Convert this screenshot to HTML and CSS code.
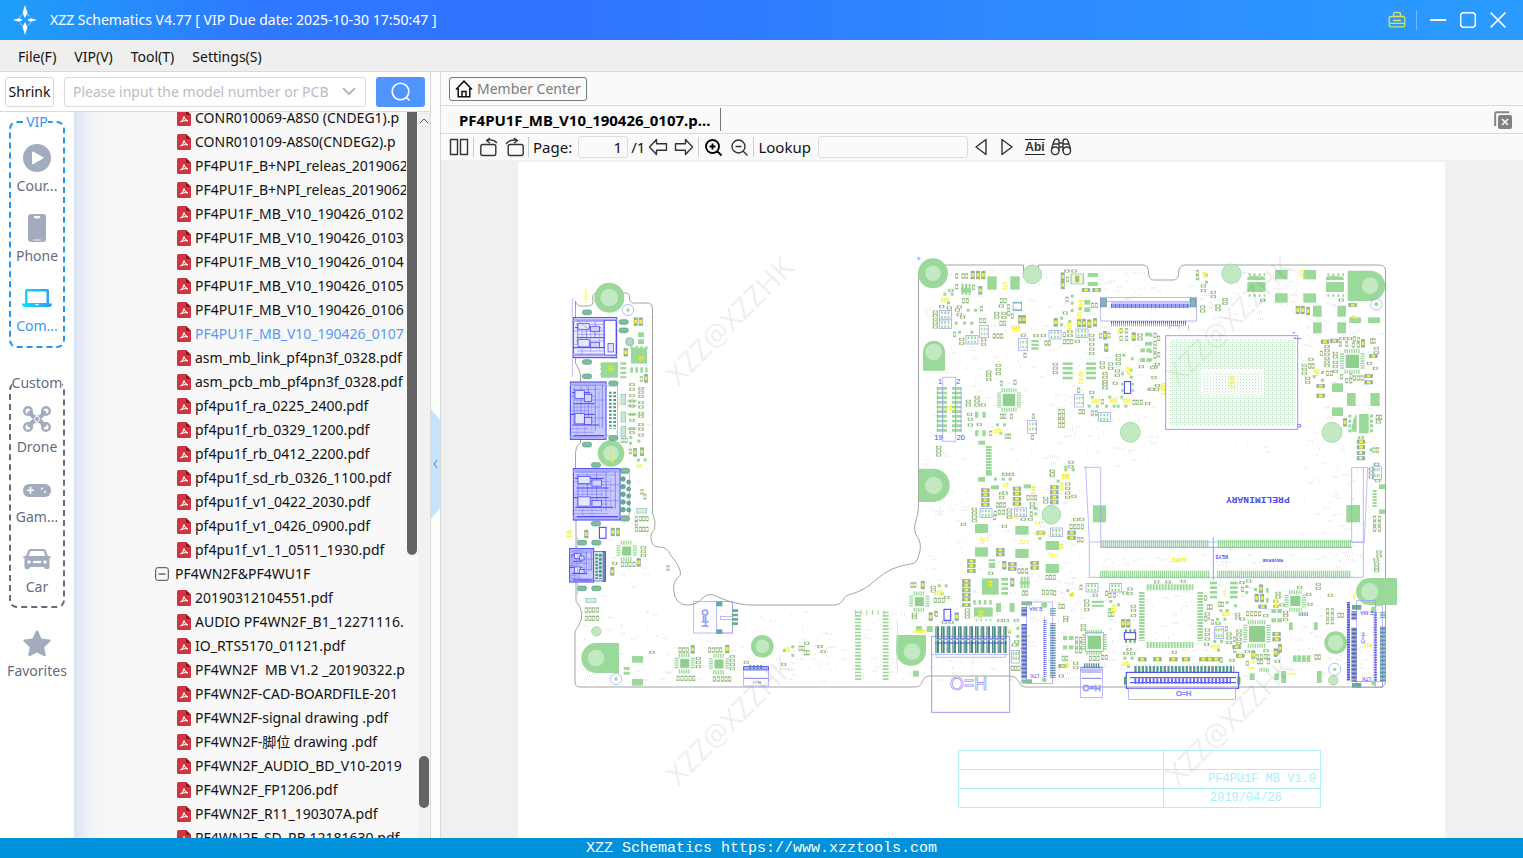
FILE: index.html
```html
<!DOCTYPE html>
<html lang="en">
<head>
<meta charset="utf-8">
<title>XZZ Schematics</title>
<link rel="stylesheet" href="styles.css">
</head>
<body>
<svg class="defs" aria-hidden="true">
  <symbol id="pdf" viewBox="0 0 14 16"><path d="M1.500 0H9l5 5v9.500q0 1.500-1.500 1.500h-11Q0 16 0 14.500v-13Q0 0 1.500 0z" fill="#d0343c"/><path d="M9 0l5 5h-3.500Q9 5 9 3.500z" fill="#8c1218"/><path d="M3.500 12.300q2.800-1.800 3.500-6 .3 3.300 4 4.700-3.500-.6-6.500.5" fill="none" stroke="#fff" stroke-width="1.100"/></symbol>
</svg>
<div class="app">
  <header class="titlebar">
    <svg class="logo" viewBox="0 0 28 30"><circle cx="14" cy="15" r="6" fill="none" stroke="#9fd4ff" stroke-width="1" stroke-dasharray="6 3"/><path d="M14 0l2.500 8-2.500 5-2.500-5zM14 30l2.500-8-2.500-5-2.500 5zM2 15l6-1.800 4 1.800-4 1.800zM26 15l-6-1.800-4 1.800 4 1.800z" fill="#fff"/></svg>
    <h1 class="title">XZZ Schematics V4.77 [ VIP Due date: 2025-10-30 17:50:47 ]</h1>
    <button class="win" aria-label="Toolbox"><svg viewBox="0 0 18 18"><path d="M3 5.500h12q1.800 0 1.800 1.800V14q0 1.800-1.800 1.800H3Q1.200 15.800 1.200 14V7.300Q1.200 5.500 3 5.500zM5.500 5V3q0-1.500 1.500-1.500h4q1.500 0 1.500 1.500v2M5 9.500h8M2 12.300h14" fill="none" stroke="#d8e25a" stroke-width="1.300"/></svg></button>
    <span class="win-sep"></span>
    <button class="win" aria-label="Minimize"><svg viewBox="0 0 18 18"><path d="M1 9h16" stroke="#fff" stroke-width="2"/></svg></button>
    <button class="win" aria-label="Maximize"><svg viewBox="0 0 18 18"><rect x="1.700" y="1.700" width="14.600" height="14.600" rx="3" fill="none" stroke="#fff" stroke-width="1.500"/></svg></button>
    <button class="win" aria-label="Close"><svg viewBox="0 0 18 18"><path d="M1.500 1.500l15 15M16.500 1.500l-15 15" stroke="#fff" stroke-width="1.700"/></svg></button>
  </header>
  <nav class="menubar">
    <button>File(F)</button><button>VIP(V)</button><button>Tool(T)</button><button>Settings(S)</button>
  </nav>
  <main class="main">
    <section class="left">
      <form class="search">
        <button type="button" class="shrink">Shrink</button>
        <div class="combo"><input type="text" aria-label="Model number" placeholder="Please input the model number or PCB"><svg viewBox="0 0 14 9"><path d="M1 1l6 6 6-6" fill="none" stroke="#a5a8ad" stroke-width="1.600"/></svg></div>
        <button type="button" class="go" aria-label="Search"><svg viewBox="0 0 20 20"><circle cx="9.500" cy="9.500" r="8.300" fill="none" stroke="#fff" stroke-width="1.600"/><path d="M15.500 15.500l3 3" stroke="#fff" stroke-width="1.600"/></svg></button>
      </form>
      <div class="browse">
        <aside class="side">
          <fieldset class="group vip">
            <legend>VIP</legend>
            <button><svg viewBox="0 0 30 30"><circle cx="15" cy="15" r="14" fill="#a3abbe"/><path d="M10 9.500q0-1.500 1.500-.8l9.500 5.300q1 .8 0 1.600L11.500 21q-1.500.7-1.500-.8z" fill="#fff"/></svg>Cour...</button>
            <button><svg viewBox="0 0 30 30"><rect x="6" y="1" width="18" height="28" rx="3" fill="#a3abbe"/><path d="M12 3.500q0 1.500 1.500 1.500h3q1.500 0 1.500-1.500zM11 27h8" stroke="#fff" stroke-width=".8" fill="#fff"/></svg>Phone</button>
            <button class="on"><svg viewBox="0 0 30 30"><defs><linearGradient id="lg"><stop offset="0" stop-color="#04e2fb"/><stop offset="1" stop-color="#2f9af8"/></linearGradient></defs><path d="M3 8q0-2 2-2h20q2 0 2 2v12.500h3q0 3.500-3 3.500H3q-3 0-3-3.500h3zM5.500 8.500v11.500h19V8.500z" fill="url(#lg)" fill-rule="evenodd"/><path d="M13 21.700h4" stroke="#fff"/></svg>Com...</button>
          </fieldset>
          <fieldset class="group custom">
            <legend>Custom</legend>
            <button><svg viewBox="0 0 30 30"><g fill="none" stroke="#a3abbe"><path d="M7 7q4 7 8 7t8-7M7 23q4-7 8-7t8 7" stroke-width="4.500"/><circle cx="6" cy="7" r="3.800" stroke-width="2.500"/><circle cx="24" cy="7" r="3.800" stroke-width="2.500"/><circle cx="6" cy="23" r="3.800" stroke-width="2.500"/><circle cx="24" cy="23" r="3.800" stroke-width="2.500"/></g><circle cx="15" cy="15" r="2.600" fill="#a3abbe" stroke="#fff" stroke-width=".9"/></svg>Drone</button>
            <button><svg viewBox="0 0 30 30"><rect x="1" y="10" width="28" height="13" rx="6" fill="#a3abbe"/><path d="M5 16.300h7M8.500 12.800v7" stroke="#fff" stroke-width="1.600"/><circle cx="20" cy="14.500" r="1" fill="#fff"/><circle cx="23" cy="18" r="1" fill="#fff"/></svg>Gam...</button>
            <button><svg viewBox="0 0 30 30"><path d="M1 14q0-2 2-2h1l2.500-6Q7 5 8.500 5h13q1.500 0 2 1L26 12h1q2 0 2 2h-1.500v9q0 2-1.500 2h-2.500q-1.500 0-1.500-2H8q0 2-1.500 2H4q-1.500 0-1.500-2v-9zM6.500 12h17L21.500 7h-13z" fill="#a3abbe" fill-rule="evenodd"/><circle cx="7" cy="18" r="1.700" fill="#fff"/><circle cx="23" cy="18" r="1.700" fill="#fff"/><path d="M11 18h8" stroke="#fff" stroke-width="2.200"/></svg>Car</button>
          </fieldset>
          <button class="fav"><svg viewBox="0 0 30 30"><path d="M15 2.500q.8 0 1.300 1.100l3.200 7 7.600.9q2.600.5.900 2.300l-5.800 5.400 1.500 7.500q.2 2.300-1.900 1.400L15 24.500l-6.800 3.600q-2.100.9-1.900-1.400l1.500-7.500L2 13.800q-1.700-1.800.9-2.300l7.600-.9 3.200-7q.5-1.100 1.300-1.100z" fill="#a3abbe"/></svg>Favorites</button>
        </aside>
        <div class="tree">
          <ul id="files"></ul>
          <span class="thumb inner"></span>
        </div>
        <div class="scroll"><svg viewBox="0 0 10 6"><path d="M1 5l4-4 4 4" fill="none" stroke="#555"/></svg><span class="thumb outer"></span></div>
      </div>
    </section>
    <div class="split"><button aria-label="Collapse panel"><svg viewBox="0 0 9 110" preserveAspectRatio="none"><path d="M0 0l9 11v88l-9 11z" fill="#c5e3fb"/><path d="M6 51l-3 4 3 4" fill="none" stroke="#3b83d8"/></svg></button></div>
    <section class="right">
      <div class="memberbar"><button class="member"><svg viewBox="0 0 18 18"><path d="M1 9.500L9 1.200l8 8.300M3.200 8v8.800h11.600V8M7 16.800V11.500h4v5.300" fill="none" stroke="#111" stroke-width="1.500"/></svg>Member Center</button></div>
      <div class="tabs"><button class="tab">PF4PU1F_MB_V10_190426_0107.p...</button><button class="closeall" aria-label="Close all tabs"><svg viewBox="0 0 18 18"><path d="M1.200 15V2.500q0-1.300 1.300-1.300H15" fill="none" stroke="#858585" stroke-width="2"/><rect x="4" y="4" width="14" height="14" rx="2" fill="#808080"/><path d="M8 8l6 6M14 8l-6 6" stroke="#fff" stroke-width="1.500"/></svg></button></div>
      <div class="tools">
        <button aria-label="Two pages"><svg viewBox="0 0 20 20"><path d="M1.500 2.500h7v15h-7zM11.500 2.500h7v15h-7z" class="ln"/></svg></button><i class="sep"></i>
        <button aria-label="Rotate left"><svg viewBox="0 0 20 20"><rect x="2.800" y="7.500" width="15" height="11" rx="2" class="ln"/><path d="M19 6Q15 1.800 9 3.300M12 1L8.500 3.500 12 6.300" class="ln"/></svg></button>
        <button class="rr" aria-label="Rotate right"><svg viewBox="0 0 20 20"><rect x="4.200" y="7.500" width="15" height="11" rx="2" class="ln"/><path d="M2 7Q6 1.800 13 3.300M10 1l3.500 2.500L10 6.300" class="ln"/></svg></button><i class="sep"></i>
        <label for="page">Page:</label><input id="page" class="page" type="text" value="1"><span class="total">/1</span>
        <button aria-label="Previous page"><svg viewBox="0 0 20 20"><path d="M1.500 10l7-7.500v4.300h10v6.400h-10v4.300z" class="ln"/></svg></button>
        <button class="next" aria-label="Next page"><svg viewBox="0 0 20 20"><path d="M18.500 10l-7-7.500v4.300h-10v6.400h10v4.300z" class="ln"/></svg></button><i class="sep"></i>
        <button aria-label="Zoom in"><svg viewBox="0 0 20 20"><path d="M9.500 3a6.500 6.500 0 100 13 6.500 6.500 0 100-13zM14.200 14.200l4.300 4.300M6.500 9.500h6M9.500 6.500v6" class="ln bold"/></svg></button>
        <button class="next" aria-label="Zoom out"><svg viewBox="0 0 20 20"><path d="M9.500 3a6.500 6.500 0 100 13 6.500 6.500 0 100-13zM14.200 14.200l4.300 4.300M6.500 9.500h6" class="ln"/></svg></button><i class="sep"></i>
        <label for="look">Lookup</label><input id="look" class="look" type="text">
        <button aria-label="Find previous"><svg viewBox="0 0 20 20"><path d="M14 2.500v15L4 10z" class="ln"/></svg></button>
        <button class="next" aria-label="Find next"><svg viewBox="0 0 20 20"><path d="M4 2.500v15L14 10z" class="ln"/></svg></button>
        <button class="abi">Abi</button>
        <button class="bino" aria-label="Find"><svg viewBox="0 0 22 20"><g class="ln"><path d="M1.500 12L4 4q.5-2 2.500-2 2.500 0 2.500 2.500V14M20.500 12L18 4q-.5-2-2.500-2Q13 2 13 4.500V14M9 6h4M9 10h4M3 7h6M13 7h6"/><circle cx="5.200" cy="13.800" r="3.800"/><circle cx="16.800" cy="13.800" r="3.800"/></g></svg></button>
      </div>
      <div class="viewer">
        <div class="sheet"><svg id="board" viewBox="518 162 927 676" preserveAspectRatio="xMidYMin meet" role="img" aria-label="PF4PU1F board layout"></svg></div>
      </div>
    </section>
  </main>
  <footer class="status">XZZ Schematics https://www.xzztools.com</footer>
</div>
<script src="board.js"></script>
</body>
</html>
```
FILE: styles.css
```css
* { box-sizing: border-box; }
body { margin: 0; font: 15px/20px "Noto Sans", "Noto Sans CJK SC", sans-serif; color: #111; }
button, input { font: inherit; color: inherit; margin: 0; padding: 0; border: 0; background: none; }
button { cursor: pointer; }
svg { display: block; flex: none; }
.defs { position: absolute; width: 0; height: 0; }
.app { height: 100vh; display: flex; flex-direction: column; overflow: hidden; background: #f0f0f0; }
.titlebar { flex: none; height: 40px; display: flex; align-items: center; padding: 0 16px 0 11px; background: linear-gradient(90deg, #1e9ff8 0, #2f78ff 17%, #3073ff 36%, #2e88ff 65%, #2a9cff 100%); color: #fff; }
.logo { width: 28px; height: 30px; }
.title { flex: 1; margin: 0 0 0 11px; font-size: 14px; line-height: 22px; font-weight: 400; white-space: nowrap; }
.win { width: 18px; height: 18px; margin-left: 12px; }
.win svg { width: 18px; height: 18px; }
.win-sep { width: 1px; height: 20px; margin-left: 10px; background: #73b8ff; }
.menubar { flex: none; height: 32px; display: flex; align-items: center; gap: 18px; padding: 2px 18px 0; border-bottom: 1px solid #dadada; background: #efefef; font-size: 14px; }
.main { flex: 1; min-height: 0; display: flex; }
.left { flex: none; width: 430px; display: flex; flex-direction: column; background: #fafafa; }
.search { flex: none; height: 40px; display: flex; align-items: center; padding: 0 5px; border-bottom: 1px solid #dadada; background: #fff; font-size: 14px; }
.shrink { width: 49px; height: 30px; padding-top: 1px; border: 1px solid #d8d8d8; border-radius: 3px; }
.combo { width: 302px; height: 30px; margin: 0 10px; display: flex; align-items: center; border: 1px solid #d8dade; border-radius: 3px; padding: 0 9px 0 8px; gap: 6px; background: #fff; }
.combo input { flex: 1; min-width: 0; }
.combo input::placeholder { color: #b9bdc4; opacity: 1; }
.combo svg { width: 14px; height: 9px; }
.go { width: 49px; height: 30px; display: grid; place-items: center; border-radius: 3px; background: #5094ff; }
.go svg { width: 20px; height: 20px; }
.browse { flex: 1; min-height: 0; display: flex; }
.side { flex: none; width: 74px; background: #fff; color: #646c80; font-size: 14px; text-align: center; }
.side button { width: 56px; height: 70px; display: flex; flex-direction: column; align-items: center; gap: 3px; padding-top: 11px; }
.side button svg { width: 30px; height: 30px; }
.group { width: 56px; min-width: 0; margin: 0 9px; padding: 0; border: 2px dashed #646c80; border-radius: 8px; display: flex; flex-direction: column; align-items: center; }
.group legend { padding: 0; margin: 0 auto; line-height: 20px; }
.vip { border-color: #2795f2; height: 236px; }
.vip legend, .side .on { color: #3897f5; }
.custom { height: 235px; margin-top: 25px; }
.side .fav { width: 74px; margin-top: 9px; }
.tree { flex: 1; min-width: 0; position: relative; overflow: hidden; background: linear-gradient(90deg, #dbe3f2 0, #f1f3f7 16px, #f8f8f8 36px); font-size: 14px; }
.tree ul { list-style: none; margin: -6px 12px 0 0; padding: 0 0 0 103px; }
.tree li { height: 24px; line-height: 26px; overflow: hidden; display: flex; align-items: center; gap: 4px; white-space: pre; }
.tree li svg { width: 14px; height: 16px; }
.tree .folder { margin-left: -22px; gap: 6px; }
.tree .sel { color: #5b97f5; }
.thumb { display: block; background: #646464; border-radius: 5px; }
.inner { position: absolute; right: 1px; top: 0; width: 10px; height: 61%; border-radius: 0 0 5px 5px; }
.scroll { flex: none; width: 12px; background: #f1f1f1; display: flex; flex-direction: column; align-items: center; padding-top: 6px; }
.scroll svg { width: 10px; height: 6px; }
.outer { width: 10px; height: 52px; margin-top: auto; margin-bottom: 30px; }
.split { flex: none; width: 11px; padding-top: 18px; border: solid #dadada; border-width: 0 1px; background: #fafffa; display: flex; align-items: center; }
.split button, .split svg { width: 9px; height: 110px; }
.right { flex: 1; min-width: 0; display: flex; flex-direction: column; background: #fafafa; }
.memberbar { flex: none; height: 34px; padding: 5px 8px; border-bottom: 1px solid #dadada; }
.member { height: 24px; display: flex; align-items: center; gap: 4px; padding: 0 5px; border: 1px solid #777; border-radius: 3px; color: #7c7c7c; font-size: 14px; }
.member svg { width: 18px; height: 18px; }
.tabs { flex: none; height: 28px; display: flex; justify-content: space-between; align-items: center; padding: 0 11px 0 8px; border-bottom: 1px solid #dadada; }
.tab { height: 23px; padding: 0 10px; border-right: 1px solid #777; font-weight: 700; color: #000; }
.closeall svg { width: 18px; height: 18px; }
.tools { flex: none; height: 26px; display: flex; align-items: center; padding-left: 8px; white-space: nowrap; }
.tools button, .tools svg { width: 20px; height: 20px; }
.tools .bino, .bino svg { width: 22px; }
.ln { fill: none; stroke: #333; stroke-width: 1.4; stroke-linejoin: round; }
.ln.bold { stroke: #000; stroke-width: 1.9; }
.sep { width: 1px; height: 20px; margin: 0 4px; background: #ccc; }
.tools .rr, .tools .next { margin-left: 6px; }
.tools input { height: 22px; border: 1px solid #ddd; border-radius: 3px; }
.page { width: 50px; margin-left: 6px; padding-right: 5px; text-align: right; }
.total { margin: 0 3px; }
.look { width: 150px; margin: 0 4px 0 7px; padding: 0 5px; }
.tools .abi { margin: 0 5px 0 7px; height: 16px; border: solid #222; border-width: 1px 0; font: 700 12px/14px "Liberation Sans", sans-serif; color: #333; }
.viewer { flex: 1; min-height: 0; padding: 2px 78px 0 77px; background: #f0f0f0; overflow: hidden; }
.sheet { height: 100%; background: #fff; }
.sheet svg { width: 100%; }
.status { flex: none; height: 20px; background: #0091da; color: #fff; font: 15px/22px "Liberation Mono", monospace; text-align: center; }
.wm { font: 29px "Noto Sans", sans-serif; fill: #000; fill-opacity: .08; text-anchor: middle; }
.yl { font: 700 14px "Liberation Mono", monospace; fill: #f4f400; }
.bl { font-family: "Liberation Sans", sans-serif; fill: #4b4bf0; }
.hollow { font-family: "Liberation Sans", sans-serif; fill: #fff; stroke: #8c8cfa; stroke-width: 2; }
.cy { font: 12px "Liberation Mono", monospace; fill: #a8f0fb; }
```
FILE: board.js
```js
const files = [
  "CONR010069-A8S0 (CNDEG1).p", "CONR010109-A8S0(CNDEG2).p", "PF4PU1F_B+NPI_releas_2019062",
  "PF4PU1F_B+NPI_releas_2019062", "PF4PU1F_MB_V10_190426_0102", "PF4PU1F_MB_V10_190426_0103",
  "PF4PU1F_MB_V10_190426_0104", "PF4PU1F_MB_V10_190426_0105", "PF4PU1F_MB_V10_190426_0106",
  "*PF4PU1F_MB_V10_190426_0107", "asm_mb_link_pf4pn3f_0328.pdf", "asm_pcb_mb_pf4pn3f_0328.pdf",
  "pf4pu1f_ra_0225_2400.pdf", "pf4pu1f_rb_0329_1200.pdf", "pf4pu1f_rb_0412_2200.pdf",
  "pf4pu1f_sd_rb_0326_1100.pdf", "pf4pu1f_v1_0422_2030.pdf", "pf4pu1f_v1_0426_0900.pdf",
  "pf4pu1f_v1_1_0511_1930.pdf", "-PF4WN2F&amp;PF4WU1F", "20190312104551.pdf", "AUDIO PF4WN2F_B1_12271116.",
  "IO_RTS5170_01121.pdf", "PF4WN2F  MB V1.2 _20190322.p", "PF4WN2F-CAD-BOARDFILE-201",
  "PF4WN2F-signal drawing .pdf", "PF4WN2F-脚位 drawing .pdf", "PF4WN2F_AUDIO_BD_V10-2019",
  "PF4WN2F_FP1206.pdf", "PF4WN2F_R11_190307A.pdf", "PF4WN2F_SD_RB 12181630.pdf"
];
document.getElementById("files").innerHTML = files.map(f => {
  if (f[0] === "-") return `<li class="folder"><svg viewBox="0 0 14 14"><rect x=".7" y=".7" width="12.600" height="12.600" rx="2" fill="none" stroke="#444"/><path d="M3.500 7h7" stroke="#222"/></svg>${f.slice(1)}</li>`;
  const on = f[0] === "*";
  return `<li${on ? ' class="sel"' : ""}><svg><use href="#pdf"/></svg>${on ? f.slice(1) : f}</li>`;
}).join("");

const G = "#9bd99b", B = "#9a9afb", DB = "#3c3cf0";
let out = "";
const nums = s => s.trim() ? s.trim().split(/\s+/).map(p => p.split(",").map(Number)) : [];
const rect = (x, y, w, h, fill, stroke, sw) => { out += `<rect x="${x}" y="${y}" width="${w}" height="${h}" fill="${fill || "none"}"${stroke ? ` stroke="${stroke}" stroke-width="${sw || 2}"` : ""}/>`; };
const path = (d, stroke, sw, fill) => { out += `<path d="${d}" fill="${fill || "none"}" stroke="${stroke || "none"}" stroke-width="${sw || 2}"/>`; };
const circ = (x, y, r, fill, stroke) => { out += `<circle cx="${x}" cy="${y}" r="${r}" fill="${fill || "none"}"${stroke ? ` stroke="${stroke}" stroke-width="2"` : ""}/>`; };
const text = (x, y, s, cls, size, turn) => { out += `<text class="${cls}"${size ? ` style="font-size:${size}px"` : ""} transform="translate(${x} ${y}) rotate(${turn || 0})">${s}</text>`; };
/* evenly spaced pads: hatch runs along x (h) or along y (v) */
const hatch = (x, y, w, h, dir, on, off, col) => {
  out += dir === "h"
    ? `<path d="M${x} ${y + h / 2}h${w}" stroke="${col || G}" stroke-width="${h}" stroke-dasharray="${on} ${off}"/>`
    : `<path d="M${x + w / 2} ${y}v${h}" stroke="${col || G}" stroke-width="${w}" stroke-dasharray="${on} ${off}"/>`;
};
/* passives: two pads, silkscreen outline, white or yellow middle */
const passH = (x, y, k) => { const w = k ? 23 : 14, h = k ? 10 : 7, p = k ? 6 : 3;
  rect(x - w / 2, y - h / 2, w, h, k ? "#f0f430" : "#fff", k ? "#9aa2e6" : "#a8bf84", 2);
  rect(x - w / 2, y - h / 2, p, h, "#84b884"); rect(x + w / 2 - p, y - h / 2, p, h, "#84b884"); };
const passV = (x, y, k) => { const w = k ? 10 : 7, h = k ? 23 : 14, p = k ? 6 : 3;
  rect(x - w / 2, y - h / 2, w, h, k ? "#f0f430" : "#fff", k ? "#9aa2e6" : "#a8bf84", 2);
  rect(x - w / 2, y - h / 2, w, p, "#84b884"); rect(x - w / 2, y + h / 2 - p, w, p, "#84b884"); };
const qfn = (x, y, s) => { const t = s / 2; rect(x - t, y - t, s, s, "#8fd08f");
  hatch(x - t - 4, y - t - 17, s + 8, 12, "h", 4, 3); hatch(x - t - 4, y + t + 5, s + 8, 12, "h", 4, 3);
  hatch(x - t - 17, y - t - 4, 12, s + 8, "v", 4, 3); hatch(x + t + 5, y - t - 4, 12, s + 8, "v", 4, 3); };
const section = (ox, oy, d) => {
  out += `<g transform="translate(${ox} ${oy}) scale(${1 / 3})">`;
  nums(d.g || "").forEach(a => rect(a[0], a[1], a[2], a[3], G));
  nums(d.q || "").forEach(a => rect(a[0] - 5, a[1] - 5, 9, 9, G));
  nums(d.h || "").forEach(a => passH(a[0], a[1]));
  nums(d.v || "").forEach(a => passV(a[0], a[1]));
  nums(d.H || "").forEach(a => passH(a[0], a[1], 1));
  nums(d.V || "").forEach(a => passV(a[0], a[1], 1));
  nums(d.chip || "").forEach(a => qfn(a[0], a[1], a[2]));
  nums(d.sot || "").forEach(a => { rect(a[0] - 18, a[1] - 13, 36, 26, "none", "#8a9af0", 2);
    hatch(a[0] - 13, a[1] - 10, 26, 8, "h", 5, 5); hatch(a[0] - 13, a[1] + 3, 26, 8, "h", 5, 5); });
  (d.y || []).forEach(a => text(a[0], a[1], a[2], "yl", a[3] || 14, a[4] === undefined ? 180 : a[4]));
  if (d.draw) d.draw();
  out += "</g>";
};
const hole = (x, y, R, r) => { circ(x, y, R, G); circ(x, y, r, "#c2e9c2", "#8fcf8f"); };

/* board edge */
out += `<path fill="none" stroke="#8e8e8e" stroke-width=".8" d="M575.500 306V301q0 4 5 5h8q6 0 4-8 0-6 7-5h27q4 1 3 6 1 5 6 4h13q4 1 4 5v205q4 8 2 17-5 3-3 11 1 6 8 6 8 0 11 8 11 13 10 20-7 5-7 14 1 16 14 16 10 0 16-8 7-5 14 0 15 7 30 8h87q5 0 8-4 3-6 9-7 14-4 24-14 16-14 35-16 6 0 8-8 5-13-3-22-2-6 0-12 3-8 3-15V275q0-9 8-10h97v8h15v-8h105q5 1 5 7 0 8 5 8h20q5 0 5-7 0-7 6-8h196q5 1 5 6v410q0 6-6 6h-355q-4 0-6-6-3-5-8-5h-80q-6 0-8 5-2 6-7 6H580q-5 0-5-5v-50q1-3 4-7 7-12-3-24V510M575.500 303v60q4 6 5 12v68q-5 2-5 12v40"/>`;

/* vias */
let seed = 7;
const rnd = () => (seed = (seed * 16807) % 2147483647) / 2147483647;
const vias = (x, y, w, h, n) => { let d = "";
  for (let i = 0; i < n; i++) { const px = Math.round(x + rnd() * w), py = Math.round(y + rnd() * h); d += `M${px} ${py}h1`; if (rnd() > .6) d += `M${px + 2} ${py}h1m1 0h1`; }
  out += `<path d="${d}" stroke="#dcdce0" stroke-width="1"/>`; };
vias(580, 310, 70, 290, 120); vias(580, 610, 340, 72, 220); vias(921, 268, 240, 200, 360); vias(1180, 270, 200, 60, 150);
vias(1300, 330, 80, 240, 160); vias(921, 490, 160, 190, 330); vias(1090, 548, 270, 30, 110); vias(1060, 580, 320, 100, 350); vias(1090, 440, 270, 16, 12);

section(560, 280, {
  g: "213,203,48,48 123,247,51,46 234,157,18,14 234,178,18,14 216,1128,33,20 216,1197,33,20 191,1161,18,9 191,1175,18,9",
  q: "213,473 237,484 212,490 236,541 256,540 674,1112 699,1101 699,1127",
  h: "216,314 216,328 216,347 216,363 216,378 216,403 216,421 216,446 216,458 243,326 243,337 243,349 243,368 243,381 243,400 243,409 243,434 243,447 243,465 250,803 250,815 250,827 276,1117 415,1136 415,1148 415,1160 517,1130 517,1142 517,1154 517,1166 559,1147 671,1153 164,850",
  v: "229,716 229,730 229,748 241,716 241,748 251,716 251,748 261,716 261,748 79,990 90,990 101,990 112,990 79,1015 90,1015 101,1015 112,1015 187,853 199,853 210,853 222,853 246,635 255,650 360,1110 371,1110 382,1110 449,1110 460,1110 471,1110 482,1110 354,1195 366,1195 378,1195 390,1195 401,1195 463,1197 475,1197 487,1197 498,1197 509,1197 324,864 211,514 187,481 198,481 244,297",
  V: "227,125 242,125 197,217 258,295 225,517 246,515 79,762 158,756 174,756 157,874 236,847 398,1108 502,1107",
  chip: "200,813,27 374,1150,27 477,1152,27",
  draw() {
    hole(148, 53, 45, 28); hole(153, 520, 40, 25); hole(607, 1099, 34, 22); circ(109, 1054, 14, "#c2e9c2", "#8fcf8f");
    path("M177 1089H108a44 45 0 0 0 0 90h69z", null, 0, G); circ(108, 1134, 25, "#c2e9c2");
    circ(204, 90, 17, null, B); circ(204, 90, 5, G); circ(168, 1197, 17, null, B); circ(168, 1197, 5, G);
    circ(209, 185, 12, "#b5d8c5", "#60a890");
    [[81, 97], [81, 246], [81, 289], [81, 494], [160, 310], [160, 474], [108, 555], [108, 731], [66, 788], [66, 925], [109, 788], [109, 925], [191, 126], [191, 151], [195, 572], [195, 716]].forEach(a => {
      out += `<rect x="${a[0] - 14}" y="${a[1] - 7}" width="28" height="14" rx="7" fill="#80bf9c" stroke="#4f9a86" stroke-width="2"/>`; });
    /* edge connectors */
    [[40, 113, 130, 120], [31, 306, 107, 172], [40, 566, 140, 154], [29, 806, 72, 100]].forEach(([x, y, w, h], k) => {
      const dense = k !== 0;
      rect(x, y, w, h, dense ? "#c9c9ff" : "#ececff", DB, 3);
      rect(x, y + 4, w, 8, "#a9a9ff"); rect(x, y + h - 12, w, 8, "#a9a9ff");
      const n = dense ? 16 : 12;
      for (let i = 1; i < n; i++) path(`M${x + (i * 11) % 14} ${Math.round(y + h * i / n)}h${w - 14 - (i * 29) % 48}`, i % 3 ? "#8080fa" : DB, i % 3 ? 2 : 3);
      for (let i = 1; i < 10; i++) path(`M${Math.round(x + w * i / 10)} ${y + (i * 17) % 36}v${h - 36 - (i * 23) % 40}`, i % 2 ? "#6262f6" : "#8f8ffb", 2);
      rect(x + 14, y + h * .15, w * .26, h * .14, "#e6e6ff", DB, 2); rect(x + 14, y + h * .55, w * .26, h * .18, "#e6e6ff", DB, 2);
      rect(x + w * .4, y + h * .22, w * .2, h * .12, "#d4d4ff", DB, 2); rect(x + w * .4, y + h * .62, w * .2, h * .12, "#d4d4ff", DB, 2);
    });
    rect(134, 121, 34, 104, "#fff", DB, 2); rect(144, 190, 16, 26, "#e2e2ff", DB, 2); path("M50 120l58 44 24-26", DB, 1);
    rect(138, 318, 35, 148, "none", B); rect(180, 580, 28, 126, "none", B); rect(101, 815, 36, 88, "#d5e5e5", DB, 2);
    hatch(147, 335, 8, 112, "v", 6, 5, "#4f9a7c"); hatch(160, 335, 8, 112, "v", 6, 5, "#4f9a7c");
    for (let i = 0; i < 5; i++) { circ(189, 597 + i * 23, 7, "#69ad88", "#4c8f9b"); circ(206, 606 + i * 21, 6, "#69ad88", "#4c8f9b"); }
    hatch(106, 822, 8, 75, "v", 6, 4, "#4f8f99"); hatch(117, 822, 8, 75, "v", 8, 4, "#4f8f99"); hatch(128, 814, 10, 92, "v", 4, 2, "#4664b5");
    path("M37 55v235M53 772v170", B, 2);
    hatch(211, 199, 52, 8, "h", 8, 7); hatch(211, 262, 52, 16, "h", 8, 7); hatch(181, 247, 18, 48, "v", 7, 7); hatch(121, 250, 18, 42, "v", 7, 7);
    [[183, 343], [183, 396], [183, 440]].forEach(a => rect(a[0], a[1], 14, 30, "#c8ecc8", "#8ab8d0"));
    [363, 378, 403, 447].forEach(y => path(`M202 ${y}h28`, "#86c186", 3));
    rect(118, 742, 20, 33, "none", DB, 3); rect(78, 955, 30, 13, "#d9f3c0", "#9bbadf"); rect(230, 685, 30, 14, "#d9f3c0", "#9bbadf");
    rect(401, 965, 117, 94, "none", B, 2); rect(469, 965, 48, 94, "none", B, 2); rect(481, 1010, 36, 8, "none", B);
    rect(469, 965, 18, 14, "#6aa6a6"); rect(469, 1048, 18, 14, "#6aa6a6"); hatch(516, 988, 18, 52, "v", 8, 5, "#69ad88");
    text(427, 988, "O=H", "hollow", 26, 90);
    rect(551, 1160, 75, 58, "none", B, 2); rect(551, 1160, 75, 10, "#b2b2ff", DB, 2); path("M551 1195h75", DB, 2); hatch(568, 1155, 40, 12, "h", 5, 6, "#4d8d9c"); text(603, 1202, "H=O", "bl", 12, 180);
    text(80, 68, "CN8111", "yl", 12, -90); text(157, 272, "Q1", "yl", 14, -90); text(234, 241, "Q4", "yl", 14, 0); text(20, 750, "U1", "yl", 20, 90);
    text(180, 380, "C8111", "yl", 10, -90); text(158, 550, "H8003", "yl", 12, -90);
  },
  y: [[175, 1110, "H4"], [690, 1100, "D4"], [246, 553, "D4", 14]]
});

section(910, 250, {
  g: "232,79,28,40 301,79,28,40 533,69,31,12 533,96,31,12 153,114,28,14 523,150,18,14 523,172,18,14 705,248,20,11 705,276,20,11 691,295,14,12 709,295,14,12 691,324,14,12 709,324,14,12 205,572,20,12 205,682,20,12 458,337,30,8 458,351,30,8 458,365,30,8 458,380,30,8 528,337,30,8 528,351,30,8 528,365,30,8 528,380,30,8",
  q: "105,133 127,133 116,159 175,181 197,181 139,220 164,220 186,220 149,247 186,247 487,139 487,160 487,182 511,177 455,205 480,215 455,225 263,525 284,525 273,550 547,442 600,442 636,442 538,469 562,469 590,469 613,469 625,469 648,469 642,316 667,327 664,361 638,372 664,382 468,660 490,660",
  h: "123,121 95,170 118,174 76,186 76,197 76,209 76,220 76,231 148,171 142,180 148,194 158,201 260,190 260,201 282,190 282,202 340,256 378,257 400,257 466,189 471,63 492,63 545,256 545,269 545,283 545,297 545,311 502,274 480,245 480,257 155,268 155,280 221,270 221,283 265,346 265,359 265,371 236,366 236,377 236,389 201,442 175,454 175,465 201,453 201,465 220,465 179,493 181,508 181,525 208,523 436,343 436,355 436,368 577,339 577,352 602,342 602,355 585,371 585,382 585,395 585,404 585,414 625,317 625,328 625,341 622,363 622,376 616,400 545,427 694,350 735,351 720,418 740,418 713,461 86,592 86,603 86,615 483,637 483,650 427,664 427,677 284,673 304,673 690,255 690,267 274,168",
  v: "140,78 140,110 159,78 170,78 191,112 161,152 172,152 214,176 212,212 224,212 285,152 274,152 295,170 296,190 307,198 273,220 283,220 253,258 264,258 275,258 345,316 408,279 418,279 463,275 474,275 485,275 463,254 471,148 473,88 548,166 559,166 572,257 274,400 315,397 370,499 367,562 506,421 274,499 284,499 304,499 289,559 299,559 510,485 520,485 547,489 559,489 449,485 460,485 449,497 460,497 449,514 460,514 449,526 460,526 577,455 672,457 682,457 694,457 597,256 633,242 650,242 633,265 650,265 134,253 242,550",
  V: "188,75 204,75 220,75 211,121 458,80 458,105 437,217 508,219 522,219 538,221 555,217 585,256 671,260 589,293 342,208 330,208",
  H: "528,120 560,120",
  sot: "106,194 106,223 186,269 435,254 516,250 583,501",
  chip: "297,450,37",
  y: [[118, 145, "D8Q"], [333, 232, "QD8"], [572, 448, "Q80"], [624, 448, "QQ0"], [663, 448, "VQ2"], [274, 538, "Q20"], [480, 672, "Q22"], [508, 149, "D42", 14, 90], [474, 215, "Q21", 14, 90], [503, 186, "Q21", 14, 90], [508, 364, "SPI2", 16, 90], [92, 484, "HDT1", 20, 0], [651, 349, "Q18", 14, 90], [645, 240, "UFF"], [280, 95, "L73", 14, 90], [304, 236, "U27", 14, 0]],
  draw() {
    path("M20 26h12M26 20v12", "#58a7ee", 2);
    hole(69, 70, 45, 25); circ(367, 73, 28, "#c2e9c2", "#8fcf8f"); circ(661, 547, 30, "#c2e9c2", "#8fcf8f");
    path("M39 362V306a32 33 0 0 1 66 0v56z", null, 0, G); circ(71, 306, 25, "#c2e9c2");
    path("M98 382h39v192h-39z", B, 2);
    hatch(80, 411, 31, 138, "v", 8, 6); hatch(126, 411, 29, 138, "v", 8, 6); path("M83 413v133M98 413v133M137 413v133M153 413v133", B, 2);
    text(84, 401, "1", "bl", 22, 0); text(139, 401, "2", "bl", 22, 0); text(73, 570, "19", "bl", 22, 0); text(140, 570, "20", "bl", 22, 0);
    hatch(228, 588, 17, 90, "v", 7, 2); rect(208, 226, 28, 37, "none", B); rect(325, 265, 28, 37, "none", B); rect(353, 512, 27, 38, "none", B); rect(494, 433, 27, 38, "none", B);
    [[213, 233], [330, 272], [358, 518], [499, 440]].forEach(a => { hatch(a[0], a[1], 20, 8, "h", 4, 4); hatch(a[0], a[1] + 15, 20, 8, "h", 4, 4); });
    rect(309, 157, 26, 24, "none", "#7c9ad0"); hatch(309, 155, 28, 6, "h", 4, 3, "#70b0b0"); hatch(309, 177, 28, 6, "h", 4, 3, "#70b0b0");
    rect(483, 72, 38, 30, "#f4f8dc", "#8ab8c0"); rect(495, 77, 13, 20, "#a0c860"); hatch(481, 72, 6, 32, "v", 4, 4); hatch(517, 72, 6, 32, "v", 4, 4);
    rect(643, 395, 19, 35, "none", DB, 3); rect(633, 399, 8, 7, G); rect(633, 418, 8, 7, G); rect(664, 399, 8, 7, G); rect(664, 418, 8, 7, G);
    hatch(364, 270, 22, 32, "v", 7, 4); hatch(195, 485, 34, 18, "h", 10, 12); hatch(195, 541, 34, 18, "h", 10, 12); hatch(154, 101, 28, 33, "h", 7, 4);
    /* display connector */
    rect(572, 143, 288, 70, "none", B, 2); path("M572 154h288", B, 2); rect(572, 145, 18, 26, "#84b7a0", DB, 1); rect(840, 145, 18, 26, "#84b7a0", DB, 1);
    rect(603, 154, 235, 6, "#c3c3ff"); hatch(603, 161, 235, 13, "h", 3, 1, "#6c6cf4"); hatch(603, 213, 225, 8, "h", 3, 3, "#5068b4"); hatch(603, 221, 225, 8, "h", 3, 3, "#83c793");
  }
});

section(1150, 250, {
  g: "375,60,38,28 460,60,38,28 375,130,38,28 460,130,38,28 292,96,54,30 528,96,54,30 489,167,26,33 562,167,26,33 489,217,26,33 562,217,26,33 598,202,35,17 654,202,36,17 546,400,33,26 591,429,26,39 661,429,28,39 546,472,33,26 627,492,29,58",
  q: "144,87 170,76 170,97 600,499 600,514 600,528 600,543 665,499 665,514 665,528 665,543 518,368 518,391 493,380 3,256 3,280 3,305 3,330 664,600",
  h: "160,108 160,122 158,171 158,183 190,127 190,140 225,149 225,160 204,168 204,179 338,151 574,150 483,328 463,346 463,358 463,370 531,290 531,302 531,313 531,325 531,336 531,347 556,310 556,321 556,337 556,350 556,364 576,266 588,266 599,266 679,295 658,340 676,355 473,385 473,397 679,308 22,343 8,353 12,383 22,407 6,418 633,563 685,505 685,516 679,643",
  v: "142,68 142,82 15,256 26,265 15,280 15,300 26,314 15,318 514,310 489,348 479,348 533,370 544,370 575,380 590,392 602,392 614,384 625,384 636,384 665,273 672,273 613,267 625,269 610,285 625,285 571,282 590,282 682,502 692,502 672,600 683,600 603,378",
  V: "443,180 458,180 474,183 639,280 585,517",
  H: "608,165 525,275 553,272 670,318 656,378 656,397 512,408 512,437 633,575 633,592 633,609 633,625",
  chip: "607,334,40",
  draw() {
    text(158, 65, "Q8", "yl", 14, 90); text(450, 60, "L27", "yl", 14, 90); text(622, 194, "TW", "yl", 14, 180); text(496, 356, "Q81", "yl", 14, 90); text(32, 398, "U27", "yl", 22, 90);
    circ(244, 71, 29, "#c2e9c2", "#8fcf8f"); circ(546, 547, 30, "#c2e9c2", "#8fcf8f");
    path("M593 62h67a45 45 0 0 1 0 91h-67z", null, 0, G); circ(660, 107, 25, "#c2e9c2"); circ(679, 163, 17, null, B); circ(679, 163, 6, G);
    path("M292 90V82l14-5 38 3 2 10zM528 90V82l14-5 38 3 2 10z", null, 0, G); hatch(296, 70, 50, 8, "h", 6, 9); hatch(296, 133, 50, 7, "h", 6, 9); hatch(532, 70, 50, 8, "h", 6, 9); hatch(532, 133, 50, 7, "h", 6, 9);
    path("M116 226v15M58 237v-10h28v10", B, 2); path("M604 545q4-45 16-53v53z", null, 0, G);
    rect(47, 257, 396, 281, "none", B, 3); path("M430 264h8v4M427 248h8M443 524h9v7h-9M443 266h10", DB, 2);
    out += '<defs><pattern id="bga" width="12" height="12" patternUnits="userSpaceOnUse"><path d="M1 2h3M7 8h3M7 2h2" stroke="#92d29c" stroke-width="3"/></pattern><pattern id="core" width="9" height="9" patternUnits="userSpaceOnUse"><path d="M0 2h3M5 6h2" stroke="#b5dfbb" stroke-width="3"/></pattern></defs>';
    rect(58, 267, 378, 262, "url(#bga)"); rect(152, 358, 190, 78, "#fff"); rect(157, 364, 182, 70, "url(#core)");
    text(240, 378, "U17", "yl", 22, 90);
  }
});

section(910, 470, {
  g: "195,162,39,27 195,232,39,28 316,168,40,26 316,237,40,27 407,213,40,27 407,282,40,27 216,325,50,49 192,412,56,28 258,399,15,27 299,399,15,27 205,21,20,14 228,3,17,14 243,46,24,12 341,43,22,12 549,106,39,51 459,498,13,12 477,498,13,12 459,526,13,12 477,526,13,12 237,280,18,12 330,334,29,9 9,602,18,18 18,468,18,14 50,468,18,18",
  q: "257,28 280,28 301,28 445,34 468,-8 88,348 109,348 97,372 378,116 378,132 390,206 474,362 485,374 603,395 626,405 600,419 299,487 324,476 324,500 324,525 645,565 667,565 656,590",
  h: "284,13 304,13 193,118 193,129 193,141 193,152 160,163 361,148 367,102 367,113 340,148 407,85 407,96 492,79 473,42 473,55 473,69 473,82 427,4 427,15 275,83 275,71 285,69 298,120 298,132 298,142 283,169 515,148 497,149 242,310 270,452 289,452 319,451 172,420 172,431 172,441 13,433 13,443 70,352 70,363 110,382 103,457 123,457 454,618 520,467 520,479 530,393 530,405 530,419 467,442 467,452 645,369 660,357 660,371 670,409 670,421 670,437 556,376 657,538 648,550 668,550 497,580 497,593 320,515 313,525",
  v: "262,105 272,105 283,105 256,130 268,127 280,127 254,142 354,83 366,83 377,83 364,132 483,170 494,170 505,170 517,170 505,209 516,209 327,303 338,303 350,303 411,322 422,322 433,322 340,369 350,369 400,367 412,367 424,367 434,369 513,352 590,370 600,376 613,376 598,433 608,433 450,409 460,409 76,391 88,391 100,391 6,345 15,345 77,430 500,508 512,508 500,525 512,525 500,542 512,542 542,565 553,565 564,565 578,562 589,562 460,565 470,565 307,595 317,595 327,595 80,433",
  H: "226,61 226,75 226,90 226,104 321,56 321,71 321,87 321,101 433,52 433,67 433,82 433,97 271,240 271,253 184,273 184,287 184,303 307,282 307,296 374,279 374,293 392,188 485,188 485,203 169,333 169,346 169,360 169,374 169,388 169,405 458,588 697,568",
  V: "307,337 283,286 62,440 140,440 38,345 640,460 655,460",
  sot: "228,129 332,127 439,187 546,353 617,353",
  chip: "28,395,27 553,517,40",
  y: [[296, 38, "D2"], [480, 14, "Q22"], [377, 72, "D48", 14, -90], [462, 62, "S34", 14, -90], [98, 362, "Q21"], [324, 136, "Q4"], [494, 368, "Q2"], [480, 583, "Q6"], [658, 577, "Q27"], [304, 486, "Q7", 14, -90], [247, 350, "U8", 16, -90], [218, 446, "U5", 22, -90], [236, 202, "L70"], [356, 210, "L72"], [446, 253, "L13"], [460, 238, "Q4", 14, -90], [375, 166, "C47", 14, 0], [376, 196, "PU72", 14, 0], [46, 478, "H003"], [617, 428, "Q18", 14, -90], [361, 494, "M11", 12, 180]],
  draw() {
    path("M26-4h45a48 50 0 0 1 0 100H26z", null, 0, G); circ(71, 46, 26, "#c2e9c2"); circ(424, 134, 28, "#c2e9c2", "#8fcf8f");
    path("M-40 495H48v48a45 45 0 0 1-90 0z", null, 0, G); circ(6, 545, 25, "#c2e9c2");
    hatch(190, 390, 58, 14, "h", 7, 9); hatch(274, 324, 20, 51, "v", 8, 6); hatch(197, 448, 50, 6, "h", 5, 9); hatch(332, 320, 28, 35, "h", 6, 3); hatch(236, 268, 20, 30, "v", 6, 4);
    /* memory slot */
    path("M523-8h4l11 225v107M572-8h-49M572-8v240h754M538 216h822", B, 2);
    hatch(572, 210, 325, 23, "h", 4, 2); hatch(923, 210, 402, 23, "h", 4, 2); hatch(570, 302, 328, 23, "h", 4, 2); hatch(921, 302, 402, 23, "h", 4, 2); path("M538 322h822M572 232h754", B, 2);
    /* battery connector */
    rect(65, 499, 234, 228, "none", B, 3); path("M65 553h234M78 553v9h208v-9", B, 2);
    hatch(76, 469, 214, 37, "h", 11, 6, "#4d8a88"); hatch(76, 511, 214, 38, "h", 11, 6, "#4d8a88"); path("M76 507h214M76 519h214", DB, 3);
    hatch(79, 469, 214, 80, "h", 2, 15, "#b6dcb6");
    text(232, 621, "H=O", "hollow", 54, 180);
    /* M.2 slot */
    rect(350, 396, 78, 244, "none", B, 2); hatch(334, 412, 17, 28, "v", 3, 1, "#5c6cc0"); hatch(334, 462, 17, 164, "v", 3, 1, "#5c6cc0"); rect(334, 394, 32, 12, "#85bda2"); rect(334, 628, 32, 12, "#85bda2");
    hatch(420, 414, 17, 25, "v", 3, 2, "#78a8a8"); hatch(420, 460, 17, 165, "v", 3, 2, "#5c92ac"); hatch(400, 450, 10, 170, "v", 3, 3, "#8c8cfa");
    circ(403, 405, 9, G); circ(403, 630, 7, G); path("M403 440v186", DB, 1);
    text(397, 410, "E.MA", "bl", 16, 180); text(388, 612, "LTK", "bl", 16, 180);
    rect(305, 541, 24, 38, "none", B, 2); hatch(308, 545, 20, 10, "h", 5, 3); hatch(308, 560, 20, 10, "h", 5, 3);
    rect(102, 418, 20, 33, "none", DB, 3); rect(643, 488, 34, 20, "none", DB, 3); hatch(645, 478, 32, 8, "h", 6, 7, "#70a880"); hatch(645, 510, 32, 8, "h", 6, 7, "#70a880");
    rect(526, 487, 54, 57, "none", "#87b5bd", 2); hatch(545, 392, 36, 18, "v", 7, 5);
    rect(511, 594, 66, 88, "none", B, 2); path("M511 600h66M514 606h60M514 625h60M511 592h66", DB, 2); hatch(522, 580, 46, 14, "h", 4, 3, "#4d8d9c"); text(572, 645, "H=O", "hollow", 26, 180);
    hatch(710, 343, 140, 18, "h", 6, 3); hatch(710, 516, 140, 18, "h", 6, 3); hatch(687, 366, 17, 146, "v", 6, 3); hatch(862, 366, 17, 146, "v", 6, 3);
    /* keyboard connector */
    hatch(673, 588, 300, 20, "h", 7, 4, "#579d88"); rect(649, 607, 337, 48, "none", DB, 3); path("M660 623h318M660 638h318", DB, 3);
    hatch(673, 625, 290, 16, "h", 6, 5, "#6a6af4"); rect(656, 655, 320, 33, "none", B, 2); rect(642, 620, 9, 24, "#58958d"); rect(982, 620, 9, 24, "#58958d");
    text(844, 663, "H=O", "hollow", 22, 180);
  }
});

section(1150, 450, {
  g: "589,165,41,52 687,103,18,14 687,178,18,14 417,517,11,23 492,517,11,23 394,663,14,36 501,663,14,36 299,670,15,20 373,670,14,20 364,477,14,12 382,477,14,12 364,505,14,12 382,505,14,12 429,616,11,20 442,616,11,20 456,616,11,20 470,616,11,20 348,414,8,14 348,444,8,14 180,395,21,8 180,409,21,8 180,423,21,8 180,437,21,8 240,395,23,8 240,409,23,8 240,423,23,8 240,437,23,8",
  q: "291,410 291,428 317,419 232,458 232,482 257,468 213,482 203,508 225,508 195,575 215,575 206,601",
  h: "20,396 54,396 100,394 296,393 276,398 505,403 505,415 541,436 449,412 476,434 480,463 73,607 407,487 407,497 407,509 396,465 378,469 377,454 384,430 384,441 347,497 263,493 263,504 277,507 348,602 237,552 237,564 237,578 267,543 267,555 267,568 267,580 172,492 172,505 172,540 172,553 172,567 170,583 680,43 683,92 687,306 687,318 678,330 680,342 680,353 680,362 632,8 632,23 664,57 664,69 664,81 292,605 246,631 204,520 382,634",
  v: "175,471 183,471 208,463 217,463 278,418 293,491 305,491 317,491 329,491 167,444 167,506 188,516 533,483 547,483 533,497 547,497 533,515 547,515 567,496 577,496 498,621 508,621 674,205 688,205 674,219 688,219 674,237 688,237 254,568 254,600 322,620 334,620 346,620 356,620 292,640 325,635 335,635 355,635 229,536 214,630 385,605",
  V: "333,416 320,444 336,444 310,614 377,608 390,595",
  H: "338,470 380,552 380,568 260,591 271,617 22,628 70,628 108,628 160,628 180,628 198,628",
  chip: "436,453,30 321,552,48",
  y: [[110, 325, "DIMM2", 15], [240, 486, "Q20"], [209, 586, "Q19"], [316, 650, "UM2", 12], [440, 670, "SPK1", 12], [223, 420, "Q21", 12, 90], [385, 470, "Q22", 14, -90], [311, 640, "Q20", 12, -90], [667, 580, "M10", 14], [616, 450, "H811", 10, -90]],
  draw() {
    path("M190 262v128", B, 3);
    out += '<g font-weight="700">'; text(234, 314, "KEYS", "bl", 14, 180); text(399, 328, "REVERSE", "bl", 13, 180); out += "</g>";
    out += '<text class="bl" transform="translate(419 140) rotate(180)" style="font:700 29px Liberation Mono,monospace">PRELIMINARY</text>';
    path("M605 277V53h48l-10 224h-38M640 53v329", B, 2);
    hatch(668, 120, 12, 54, "v", 6, 3); rect(668, 50, 26, 38, "none", B, 2); hatch(672, 54, 18, 10, "h", 5, 3); hatch(672, 72, 18, 10, "h", 5, 3);
    path("M741 384H659a40 40 0 0 0 0 81h82z", null, 0, G); circ(659, 425, 26, "#c2e9c2");
    hole(557, 578, 34, 25); circ(550, 691, 14, "#c2e9c2", "#8fcf8f"); circ(554, 658, 18, null, B); circ(554, 658, 5, G);
    rect(194, 530, 26, 36, "none", B, 2); hatch(196, 535, 22, 8, "h", 5, 3); hatch(196, 553, 22, 8, "h", 5, 3); hatch(446, 487, 30, 11, "h", 3, 2, "#78a8a8"); hatch(328, 653, 30, 12, "h", 3, 2);
    hatch(591, 456, 9, 236, "v", 4, 1, "#5656ef"); rect(620, 452, 56, 242, "none", B, 2); rect(676, 467, 21, 245, "none", B, 2); rect(620, 694, 77, 18, "none", B);
    hatch(604, 484, 16, 25, "v", 3, 1, "#5c6cc0"); hatch(604, 533, 16, 162, "v", 3, 1, "#4e69ac"); rect(606, 465, 28, 14, "#70a8a0"); rect(606, 699, 28, 14, "#70a8a0");
    hatch(690, 486, 16, 20, "v", 3, 2, "#78a8a8"); hatch(690, 530, 16, 165, "v", 3, 1, "#5c92ac"); hatch(671, 486, 10, 210, "v", 3, 2, "#6c6cf0"); circ(671, 478, 8, G); circ(671, 700, 7, G);
    text(670, 482, "E.MA", "bl", 16, 180); text(663, 682, "LTK", "bl", 16, 180); text(634, 547, "H=O", "bl", 16, 90);
  }
});

/* wireless card footprint */
section(840, 600, {
  h: "-60,140 -50,155 -100,130", v: "-110,145 -120,145 -96,158 -104,158",
  draw() { hatch(45, 35, 18, 210, "v", 5, 5); hatch(128, 35, 18, 210, "v", 5, 5); hatch(45, 30, 100, 14, "h", 3, 14); path("M172 60v160", "#d2d2d6", 2); }
});

/* title block */
out += '<path d="M958.500 750.500h362v57h-362zM958.500 769.500h362M958.500 788.500h362M1163.500 750.500v57" fill="none" stroke="#aeeffa"/>';
text(1208, 782, "PF4PU1F MB V1.0", "cy", 12); text(1210, 801, "2019/04/26", "cy", 12);
[[729, 320], [1229, 320], [729, 720], [1229, 720]].forEach(([x, y]) => {
  out += `<text class="wm" transform="translate(${x + 8} ${y + 8}) rotate(-45)">XZZ@XZZHK</text>`;
});
document.getElementById("board").innerHTML = out;
```
